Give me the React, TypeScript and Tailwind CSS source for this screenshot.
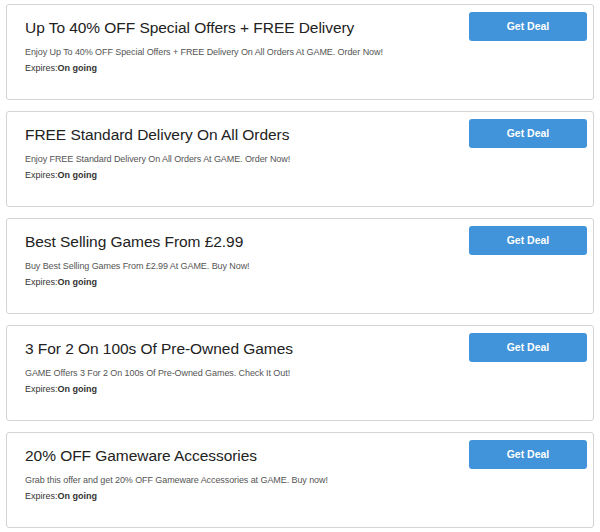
const deals = [
  {
    title: "Up To 40% OFF Special Offers + FREE Delivery",
    desc: "Enjoy Up To 40% OFF Special Offers + FREE Delivery On All Orders At GAME. Order Now!",
  },
  {
    title: "FREE Standard Delivery On All Orders",
    desc: "Enjoy FREE Standard Delivery On All Orders At GAME. Order Now!",
  },
  {
    title: "Best Selling Games From £2.99",
    desc: "Buy Best Selling Games From £2.99 At GAME. Buy Now!",
  },
  {
    title: "3 For 2 On 100s Of Pre-Owned Games",
    desc: "GAME Offers 3 For 2 On 100s Of Pre-Owned Games. Check It Out!",
  },
  {
    title: "20% OFF Gameware Accessories",
    desc: "Grab this offer and get 20% OFF Gameware Accessories at GAME. Buy now!",
  },
];

function DealCard({ title, desc }: { title: string; desc: string }) {
  return (
    <div className="flex h-[96px] justify-between rounded-[3px] border border-[#d4d4d4] bg-white pl-[18px] pr-[6px] pt-[7px]">
      <div className="pt-[7px]">
        <h3 className="text-[15.5px] leading-[18px] tracking-[-0.05px] text-[#222]">{title}</h3>
        <p className="mt-[9px] text-[9px] leading-[12px] tracking-[-0.08px] text-[#555]">{desc}</p>
        <p className="mt-[4px] text-[9px] leading-[12px] text-[#333]">
          Expires:<span className="font-bold">On going</span>
        </p>
      </div>
      <button className="h-[29px] w-[118px] shrink-0 rounded-[3px] bg-[#4194d9] text-[10.5px] font-bold text-white">
        Get Deal
      </button>
    </div>
  );
}

export default function App() {
  return (
    <div className="min-h-[532px] w-[600px] bg-white pl-[6px] pr-[6px] pt-[4px] font-['Liberation_Sans',Arial,sans-serif]">
      <div className="flex flex-col gap-[11px]">
        {deals.map((d) => (
          <DealCard key={d.title} title={d.title} desc={d.desc} />
        ))}
      </div>
    </div>
  );
}
